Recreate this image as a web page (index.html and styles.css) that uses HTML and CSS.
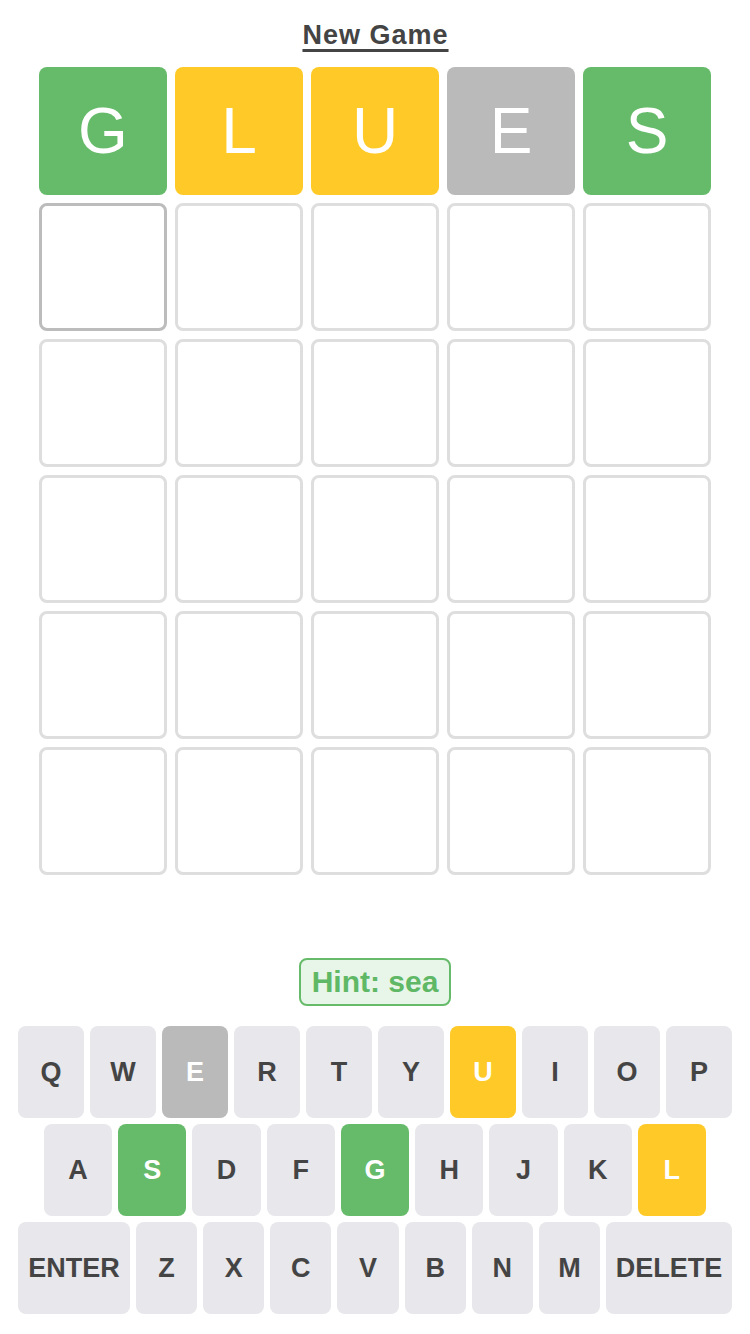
FILE: index.html
```html
<!DOCTYPE html>
<html>
<head>
<meta charset="utf-8">
<link rel="stylesheet" href="styles.css">
</head>
<body>
<div class="app">
  <header class="header"><a class="title">New Game</a></header>
  <div class="grid">
    <div class="tile correct">G</div>
    <div class="tile present">L</div>
    <div class="tile present">U</div>
    <div class="tile absent">E</div>
    <div class="tile correct">S</div>

    <div class="tile active"></div>
    <div class="tile"></div>
    <div class="tile"></div>
    <div class="tile"></div>
    <div class="tile"></div>

    <div class="tile"></div><div class="tile"></div><div class="tile"></div><div class="tile"></div><div class="tile"></div>
    <div class="tile"></div><div class="tile"></div><div class="tile"></div><div class="tile"></div><div class="tile"></div>
    <div class="tile"></div><div class="tile"></div><div class="tile"></div><div class="tile"></div><div class="tile"></div>
    <div class="tile"></div><div class="tile"></div><div class="tile"></div><div class="tile"></div><div class="tile"></div>
  </div>

  <div class="hint">Hint: sea</div>

  <div class="keyboard">
    <div class="krow">
      <div class="key">Q</div>
      <div class="key">W</div>
      <div class="key absent">E</div>
      <div class="key">R</div>
      <div class="key">T</div>
      <div class="key">Y</div>
      <div class="key present">U</div>
      <div class="key">I</div>
      <div class="key">O</div>
      <div class="key">P</div>
    </div>
    <div class="krow krow-mid">
      <div class="key">A</div>
      <div class="key correct">S</div>
      <div class="key">D</div>
      <div class="key">F</div>
      <div class="key correct">G</div>
      <div class="key">H</div>
      <div class="key">J</div>
      <div class="key">K</div>
      <div class="key present">L</div>
    </div>
    <div class="krow">
      <div class="key key-enter">ENTER</div>
      <div class="key">Z</div>
      <div class="key">X</div>
      <div class="key">C</div>
      <div class="key">V</div>
      <div class="key">B</div>
      <div class="key">N</div>
      <div class="key">M</div>
      <div class="key key-delete">DELETE</div>
    </div>
  </div>
</div>
</body>
</html>
```

FILE: styles.css
```css
* {
  box-sizing: border-box;
}

html, body {
  margin: 0;
  padding: 0;
  background: #ffffff;
}

body {
  font-family: "Liberation Sans", Arial, sans-serif;
  color: #444444;
}

.app {
  width: 750px;
  display: flex;
  flex-direction: column;
  align-items: center;
}

.header {
  height: 67px;
  padding-top: 3px;
  display: flex;
  align-items: center;
  justify-content: center;
}

.title {
  font-size: 27px;
  font-weight: 700;
  color: #444444;
  text-decoration: underline;
  text-decoration-thickness: 3px;
  text-underline-offset: 5px;
  letter-spacing: 1px;
  margin-right: -1px;
}

.grid {
  display: grid;
  grid-template-columns: repeat(5, 128px);
  grid-auto-rows: 128px;
  gap: 8px;
}

.tile {
  border: 3px solid #dedede;
  border-radius: 8px;
  display: flex;
  align-items: center;
  justify-content: center;
  font-size: 64px;
  font-weight: 400;
  color: #ffffff;
}

.tile.active {
  border-color: #bcbcbc;
}

.tile.correct {
  background: #66bb6a;
  border: none;
}

.tile.present {
  background: #ffca28;
  border: none;
}

.tile.absent {
  background: #bababa;
  border: none;
}

.hint {
  margin-top: 83px;
  height: 48px;
  padding: 0 11px;
  display: flex;
  align-items: center;
  border: 2px solid #66bb6a;
  border-radius: 8px;
  background: #e8f5e9;
  color: #5fb865;
  font-size: 30px;
  font-weight: 700;
}

.keyboard {
  margin-top: 20px;
  width: 714px;
  display: flex;
  flex-direction: column;
  gap: 6px;
}

.krow {
  display: flex;
  gap: 6px;
}

.krow-mid {
  padding: 0 26px;
}

.key {
  flex: 1 1 0;
  height: 92px;
  border-radius: 8px;
  background: #e7e7ec;
  color: #444444;
  font-size: 27px;
  font-weight: 700;
  display: flex;
  align-items: center;
  justify-content: center;
}

.key.key-enter {
  flex: 0 0 112px;
}

.key.key-delete {
  flex: 0 0 126px;
}

.key.correct {
  background: #66bb6a;
  color: #ffffff;
}

.key.present {
  background: #ffca28;
  color: #ffffff;
}

.key.absent {
  background: #bababa;
  color: #ffffff;
}
```
